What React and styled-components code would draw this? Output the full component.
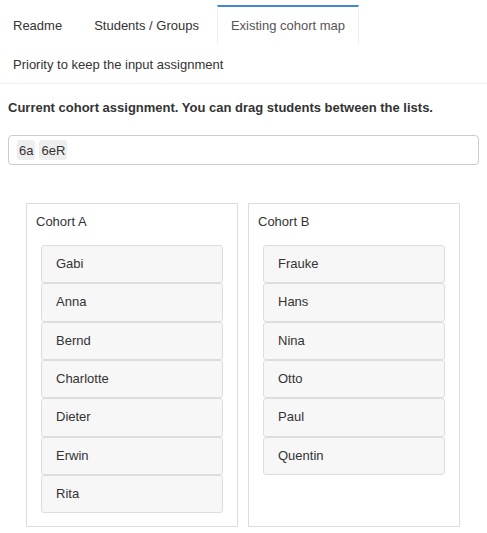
import { createGlobalStyle, styled } from "styled-components";

const GlobalStyle = createGlobalStyle`
  body {
    margin: 0;
    background: #fff;
    font-family: "Liberation Sans", Arial, sans-serif;
    font-size: 13px;
    line-height: 20px;
    color: #333;
  }
`;

const tabs = [
  { label: "Readme" },
  { label: "Students / Groups" },
  { label: "Existing cohort map", active: true },
  { label: "Priority to keep the input assignment" },
];

const cohorts = [
  {
    name: "Cohort A",
    students: ["Gabi", "Anna", "Bernd", "Charlotte", "Dieter", "Erwin", "Rita"],
  },
  {
    name: "Cohort B",
    students: ["Frauke", "Hans", "Nina", "Otto", "Paul", "Quentin"],
  },
];

const groups = ["6a", "6eR"];

function App() {
  return (
    <>
      <GlobalStyle />
      <Nav>
        {tabs.map((tab) => (
          <Tab key={tab.label} $active={tab.active}>
            {tab.label}
          </Tab>
        ))}
      </Nav>
      <Content>
        <Intro>
          Current cohort assignment. You can drag students between the lists.
        </Intro>
        <TagInput>
          {groups.map((g) => (
            <Tag key={g}>{g}</Tag>
          ))}
        </TagInput>
        <Columns>
          {cohorts.map((cohort) => (
            <Panel key={cohort.name}>
              <PanelTitle>{cohort.name}</PanelTitle>
              <List>
                {cohort.students.map((s) => (
                  <Item key={s}>{s}</Item>
                ))}
              </List>
            </Panel>
          ))}
        </Columns>
      </Content>
    </>
  );
}

const Nav = styled.div`
  display: flex;
  flex-wrap: wrap;
  padding: 5px 0 0;
  margin-left: -1px;
  border-bottom: 1px solid #eee;
`;

const Tab = styled.div`
  padding: 9px 13px 8px;
  margin-right: 4px;
  border: 1px solid transparent;
  border-top: 2px solid transparent;
  border-bottom: 0;
  color: ${(p) => (p.$active ? "#555" : "#333")};
  white-space: nowrap;
  cursor: pointer;
  ${(p) =>
    p.$active &&
    `
    border-color: #eee;
    border-top-color: #428bca;
  `}
`;

const Content = styled.div`
  padding: 14px 8px 0;
`;

const Intro = styled.p`
  margin: 0 0 17px;
  font-weight: bold;
`;

const TagInput = styled.div`
  display: flex;
  gap: 4px;
  padding: 4px 8px;
  height: 30px;
  box-sizing: border-box;
  border: 1px solid #ccc;
  border-radius: 4px;
`;

const Tag = styled.span`
  display: inline-block;
  padding: 0 2px;
  line-height: 21px;
  background: #eee;
  border-radius: 3px;
  color: #333;
`;

const Columns = styled.div`
  display: grid;
  grid-template-columns: 212px 212px;
  gap: 10px;
  margin: 38px 18px 0;
`;

const Panel = styled.div`
  border: 1px solid #ddd;
`;

const PanelTitle = styled.div`
  padding: 8px 9px 13px;
`;

const List = styled.div`
  padding: 0 14px 13px;
`;

const Item = styled.div`
  padding: 8px 14px;
  line-height: 20.33px;
  background: #f7f7f7;
  border: 1px solid #ddd;
  border-radius: 3px;
`;

export default App;
